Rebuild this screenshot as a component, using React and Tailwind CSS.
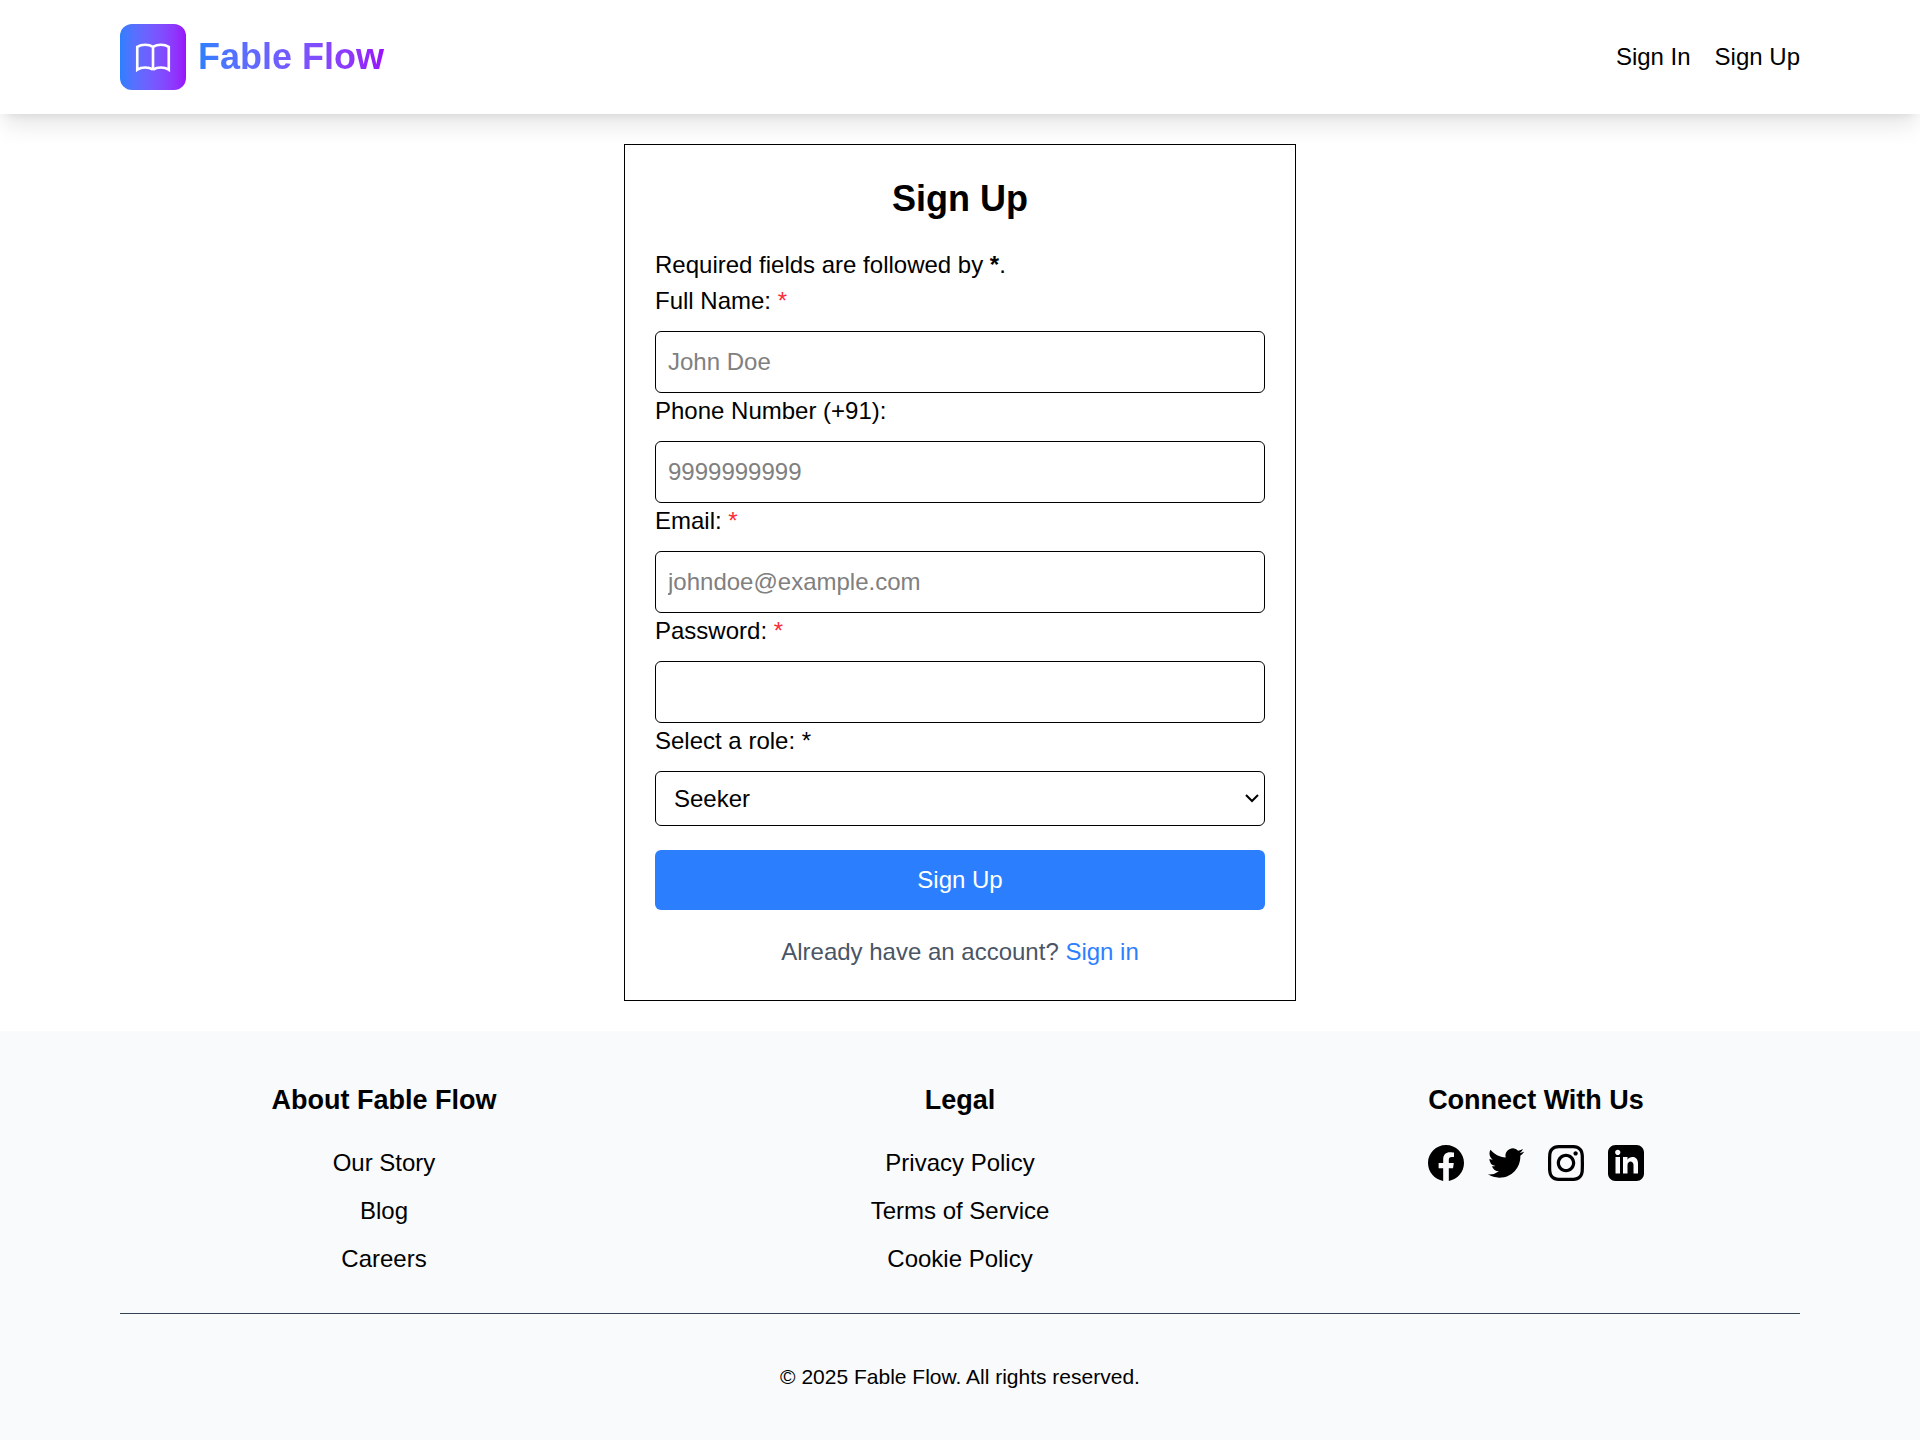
const fields = [
  { id: "fullName", label: "Full Name:", type: "text", placeholder: "John Doe", required: true },
  { id: "phone", label: "Phone Number (+91):", type: "tel", placeholder: "9999999999", required: false },
  { id: "email", label: "Email:", type: "email", placeholder: "johndoe@example.com", required: true },
  { id: "password", label: "Password:", type: "password", placeholder: "", required: true },
];

const linkColumns = [
  { title: "About Fable Flow", links: ["Our Story", "Blog", "Careers"] },
  { title: "Legal", links: ["Privacy Policy", "Terms of Service", "Cookie Policy"] },
];

const socials = [
  {
    name: "Facebook",
    path: "M24 12.073c0-6.627-5.373-12-12-12s-12 5.373-12 12c0 5.99 4.388 10.954 10.125 11.854v-8.385H7.078v-3.47h3.047V9.43c0-3.007 1.792-4.669 4.533-4.669 1.312 0 2.686.235 2.686.235v2.953H15.83c-1.491 0-1.956.925-1.956 1.874v2.25h3.328l-.532 3.47h-2.796v8.385C19.612 23.027 24 18.062 24 12.073z",
  },
  {
    name: "Twitter",
    path: "M23.953 4.57a10 10 0 01-2.825.775 4.958 4.958 0 002.163-2.723c-.951.555-2.005.959-3.127 1.184a4.92 4.92 0 00-8.384 4.482C7.69 8.095 4.067 6.13 1.64 3.162a4.822 4.822 0 00-.666 2.475c0 1.71.87 3.213 2.188 4.096a4.904 4.904 0 01-2.228-.616v.06a4.923 4.923 0 003.946 4.827 4.996 4.996 0 01-2.212.085 4.936 4.936 0 004.604 3.417 9.867 9.867 0 01-6.102 2.105c-.39 0-.779-.023-1.17-.067a13.995 13.995 0 007.557 2.209c9.053 0 13.998-7.496 13.998-13.985 0-.21 0-.42-.015-.63A9.935 9.935 0 0024 4.59z",
  },
  {
    name: "Instagram",
    path: "M12 2.163c3.204 0 3.584.012 4.85.07 3.252.148 4.771 1.691 4.919 4.919.058 1.265.069 1.645.069 4.849 0 3.205-.012 3.584-.069 4.849-.149 3.225-1.664 4.771-4.919 4.919-1.266.058-1.644.07-4.85.07-3.204 0-3.584-.012-4.849-.07-3.26-.149-4.771-1.699-4.919-4.92-.058-1.265-.07-1.644-.07-4.849 0-3.204.013-3.583.07-4.849.149-3.227 1.664-4.771 4.919-4.919 1.266-.057 1.645-.069 4.849-.069zm0-2.163c-3.259 0-3.667.014-4.947.072-4.358.2-6.78 2.618-6.98 6.98-.059 1.281-.073 1.689-.073 4.948 0 3.259.014 3.668.072 4.948.2 4.358 2.618 6.78 6.98 6.98 1.281.058 1.689.072 4.948.072 3.259 0 3.668-.014 4.948-.072 4.354-.2 6.782-2.618 6.979-6.98.059-1.28.073-1.689.073-4.948 0-3.259-.014-3.667-.072-4.947-.196-4.354-2.617-6.78-6.979-6.98-1.281-.059-1.69-.073-4.949-.073zm0 5.838c-3.403 0-6.162 2.759-6.162 6.162s2.759 6.163 6.162 6.163 6.162-2.759 6.162-6.163c0-3.403-2.759-6.162-6.162-6.162zm0 10.162c-2.209 0-4-1.79-4-4 0-2.209 1.791-4 4-4s4 1.791 4 4c0 2.21-1.791 4-4 4zm6.406-11.845c-.796 0-1.441.645-1.441 1.44s.645 1.44 1.441 1.44c.795 0 1.439-.645 1.439-1.44s-.644-1.44-1.439-1.44z",
  },
  {
    name: "LinkedIn",
    path: "M19 0h-14c-2.761 0-5 2.239-5 5v14c0 2.761 2.239 5 5 5h14c2.762 0 5-2.238 5-5v-14c0-2.761-2.238-5-5-5zm-11 19h-3v-11h3v11zm-1.5-12.268c-.966 0-1.75-.79-1.75-1.764s.784-1.764 1.75-1.764 1.75.79 1.75 1.764-.783 1.764-1.75 1.764zm13.5 12.268h-3v-5.604c0-3.368-4-3.113-4 0v5.604h-3v-11h3v1.765c1.396-2.586 7-2.777 7 2.476v6.759z",
  },
];

function BookIcon() {
  return (
    <svg viewBox="0 0 24 24" className="size-[42px]" fill="none" stroke="currentColor" strokeWidth="1.5">
      <path d="M12 6.253v13m0-13C10.832 5.477 9.246 5 7.5 5S4.168 5.477 3 6.253v13C4.168 18.477 5.754 18 7.5 18s3.332.477 4.5 1.253m0-13C13.168 5.477 14.754 5 16.5 5c1.747 0 3.332.477 4.5 1.253v13C19.832 18.477 18.247 18 16.5 18c-1.746 0-3.332.477-4.5 1.253" />
    </svg>
  );
}

function Header() {
  return (
    <header className="bg-white shadow-[0_15px_22px_-4px_rgba(0,0,0,0.1),0_6px_9px_-6px_rgba(0,0,0,0.1)]">
      <nav className="flex items-center justify-between px-[120px] py-6">
        <a href="#" className="flex items-center gap-3">
          <span className="rounded-xl bg-linear-to-r from-blue-500 to-purple-600 p-3 text-white">
            <BookIcon />
          </span>
          <span className="bg-linear-to-r from-blue-500 to-purple-600 bg-clip-text text-[36px] leading-[48px] font-bold text-transparent">
            Fable Flow
          </span>
        </a>
        <ul className="flex gap-6">
          <li><a href="#">Sign In</a></li>
          <li><a href="#">Sign Up</a></li>
        </ul>
      </nav>
    </header>
  );
}

function Field({ id, label, type, placeholder, required }) {
  return (
    <div>
      <label htmlFor={id} className="block">
        {label} {required && <span className="text-red-500">*</span>}
      </label>
      <input
        id={id}
        type={type}
        placeholder={placeholder}
        className="mt-3 block w-full rounded-md border border-black p-3 placeholder:text-[#808080]"
      />
    </div>
  );
}

function SignUpForm() {
  return (
    <form className="mx-auto my-[30px] w-full max-w-2xl border border-black p-[30px]">
      <h1 className="mb-6 text-center text-[36px] leading-[48px] font-bold">Sign Up</h1>
      <p>
        Required fields are followed by <strong>*</strong>.
      </p>
      {fields.map((field) => (
        <Field key={field.id} {...field} />
      ))}
      <label htmlFor="role" className="block">
        Select a role: *
      </label>
      <div className="relative mt-3">
        <select id="role" className="block h-[55px] w-full appearance-none rounded-md border border-black bg-white px-[18px]">
          <option>Seeker</option>
          <option>Author</option>
        </select>
        <svg
          viewBox="0 0 14 10"
          className="pointer-events-none absolute top-[22px] right-[6px] h-[10px] w-[14px]"
          fill="none"
          stroke="black"
          strokeWidth="2"
        >
          <path d="M1 2l6 6 6-6" />
        </svg>
      </div>
      <button type="button" className="mt-6 block w-full rounded-md bg-blue-500 p-3 text-white">
        Sign Up
      </button>
      <p className="mt-6 text-center text-gray-600">
        Already have an account? <a href="#" className="text-blue-500">Sign in</a>
      </p>
    </form>
  );
}

function Footer() {
  return (
    <footer className="bg-gray-50 px-[120px] py-12">
      <div className="grid grid-cols-3 gap-12 text-center">
        {linkColumns.map(({ title, links }) => (
          <section key={title}>
            <h2 className="mb-6 text-[27px] leading-[42px] font-bold">{title}</h2>
            <ul className="space-y-3">
              {links.map((link) => (
                <li key={link}><a href="#">{link}</a></li>
              ))}
            </ul>
          </section>
        ))}
        <section>
          <h2 className="mb-6 text-[27px] leading-[42px] font-bold">Connect With Us</h2>
          <div className="flex justify-center gap-6">
            {socials.map(({ name, path }) => (
              <a key={name} href="#" aria-label={name}>
                <svg viewBox="0 0 24 24" className="size-9" fill="currentColor">
                  <path d={path} />
                </svg>
              </a>
            ))}
          </div>
        </section>
      </div>
      <p className="mt-9 border-t border-gray-700 pt-12 text-center text-[21px] leading-[30px]">
        © 2025 Fable Flow. All rights reserved.
      </p>
    </footer>
  );
}

export default function App() {
  return (
    <div className="min-h-screen bg-white font-['Liberation_Sans',Arial,sans-serif] text-[24px] leading-[36px] text-black">
      <Header />
      <main>
        <SignUpForm />
      </main>
      <Footer />
    </div>
  );
}
